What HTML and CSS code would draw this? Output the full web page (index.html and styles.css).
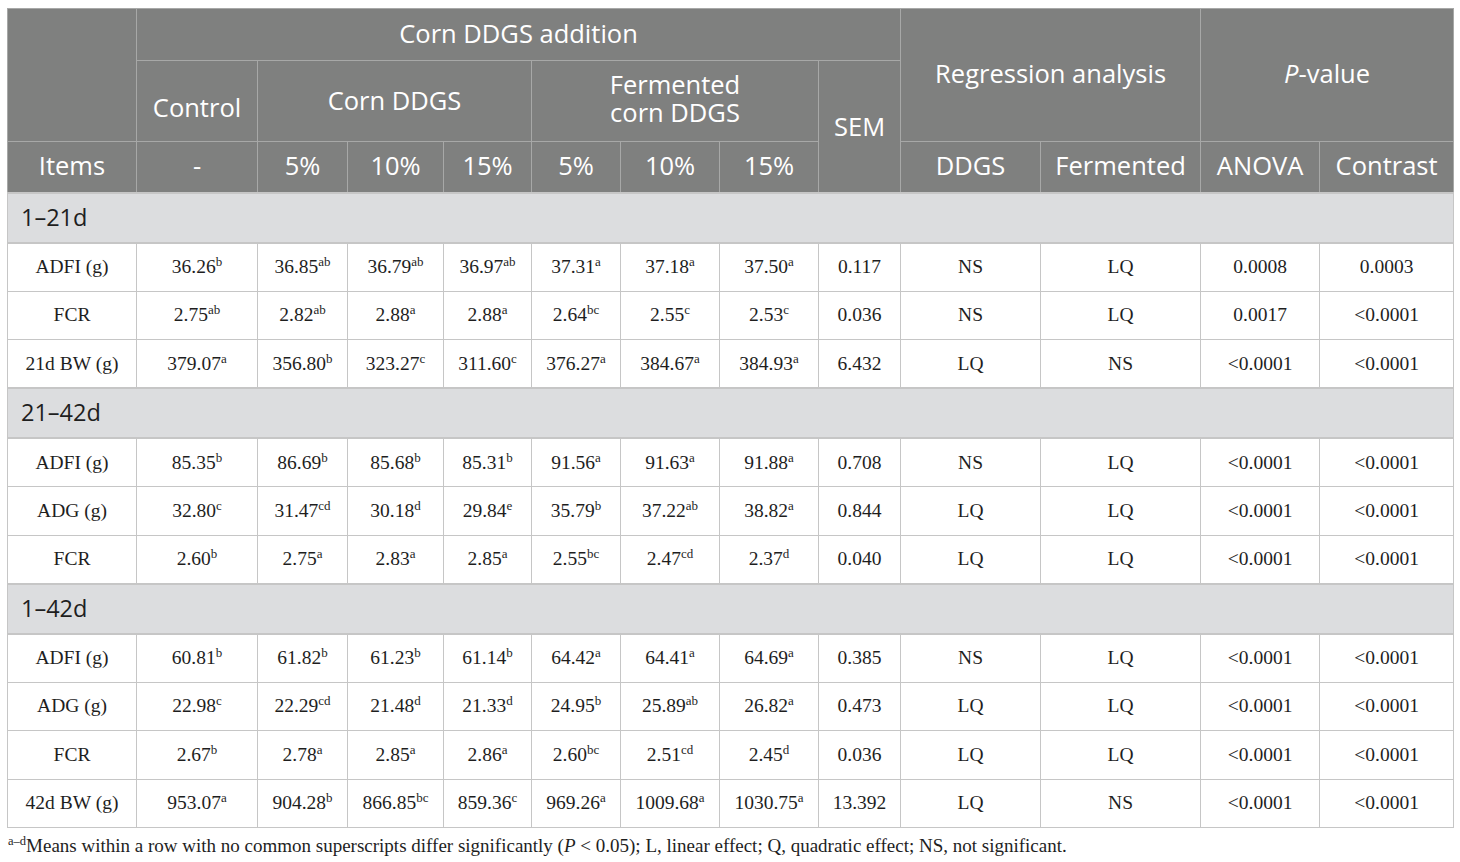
FILE: index.html
```html
<!DOCTYPE html>
<html lang="en">
<head>
    <meta charset="UTF-8">
    <title>Growth performance - Corn DDGS addition</title>
    <link rel="stylesheet" href="styles.css">
</head>
<body>
    <table class="data-table">
        <colgroup>
            <col class="c-item">
            <col class="c-control">
            <col class="c-d5">
            <col class="c-d10">
            <col class="c-d15">
            <col class="c-f5">
            <col class="c-f10">
            <col class="c-f15">
            <col class="c-sem">
            <col class="c-ddgs">
            <col class="c-ferm">
            <col class="c-anova">
            <col class="c-contrast">
        </colgroup>
        <thead>
            <tr class="head-1">
                <th rowspan="2"></th>
                <th colspan="8">Corn DDGS addition</th>
                <th colspan="2" rowspan="2" class="tall">Regression analysis</th>
                <th colspan="2" rowspan="2" class="tall"><i>P</i>-value</th>
            </tr>
            <tr class="head-2">
                <th class="control">Control</th>
                <th colspan="3">Corn DDGS</th>
                <th colspan="3" class="two-line">Fermented<br>corn DDGS</th>
                <th rowspan="2" class="sem">SEM</th>
            </tr>
            <tr class="head-3">
                <th>Items</th>
                <th>-</th>
                <th>5%</th>
                <th>10%</th>
                <th>15%</th>
                <th>5%</th>
                <th>10%</th>
                <th>15%</th>
                <th>DDGS</th>
                <th>Fermented</th>
                <th>ANOVA</th>
                <th>Contrast</th>
            </tr>
        </thead>
        <tbody>
            <tr class="section"><td colspan="13">1–21d</td></tr>
            <tr>
                <td>ADFI (g)</td>
                <td>36.26<sup>b</sup></td>
                <td>36.85<sup>ab</sup></td>
                <td>36.79<sup>ab</sup></td>
                <td>36.97<sup>ab</sup></td>
                <td>37.31<sup>a</sup></td>
                <td>37.18<sup>a</sup></td>
                <td>37.50<sup>a</sup></td>
                <td>0.117</td>
                <td>NS</td>
                <td>LQ</td>
                <td>0.0008</td>
                <td>0.0003</td>
            </tr>
            <tr>
                <td>FCR</td>
                <td>2.75<sup>ab</sup></td>
                <td>2.82<sup>ab</sup></td>
                <td>2.88<sup>a</sup></td>
                <td>2.88<sup>a</sup></td>
                <td>2.64<sup>bc</sup></td>
                <td>2.55<sup>c</sup></td>
                <td>2.53<sup>c</sup></td>
                <td>0.036</td>
                <td>NS</td>
                <td>LQ</td>
                <td>0.0017</td>
                <td>&lt;0.0001</td>
            </tr>
            <tr>
                <td>21d BW (g)</td>
                <td>379.07<sup>a</sup></td>
                <td>356.80<sup>b</sup></td>
                <td>323.27<sup>c</sup></td>
                <td>311.60<sup>c</sup></td>
                <td>376.27<sup>a</sup></td>
                <td>384.67<sup>a</sup></td>
                <td>384.93<sup>a</sup></td>
                <td>6.432</td>
                <td>LQ</td>
                <td>NS</td>
                <td>&lt;0.0001</td>
                <td>&lt;0.0001</td>
            </tr>
            <tr class="section"><td colspan="13">21–42d</td></tr>
            <tr>
                <td>ADFI (g)</td>
                <td>85.35<sup>b</sup></td>
                <td>86.69<sup>b</sup></td>
                <td>85.68<sup>b</sup></td>
                <td>85.31<sup>b</sup></td>
                <td>91.56<sup>a</sup></td>
                <td>91.63<sup>a</sup></td>
                <td>91.88<sup>a</sup></td>
                <td>0.708</td>
                <td>NS</td>
                <td>LQ</td>
                <td>&lt;0.0001</td>
                <td>&lt;0.0001</td>
            </tr>
            <tr>
                <td>ADG (g)</td>
                <td>32.80<sup>c</sup></td>
                <td>31.47<sup>cd</sup></td>
                <td>30.18<sup>d</sup></td>
                <td>29.84<sup>e</sup></td>
                <td>35.79<sup>b</sup></td>
                <td>37.22<sup>ab</sup></td>
                <td>38.82<sup>a</sup></td>
                <td>0.844</td>
                <td>LQ</td>
                <td>LQ</td>
                <td>&lt;0.0001</td>
                <td>&lt;0.0001</td>
            </tr>
            <tr>
                <td>FCR</td>
                <td>2.60<sup>b</sup></td>
                <td>2.75<sup>a</sup></td>
                <td>2.83<sup>a</sup></td>
                <td>2.85<sup>a</sup></td>
                <td>2.55<sup>bc</sup></td>
                <td>2.47<sup>cd</sup></td>
                <td>2.37<sup>d</sup></td>
                <td>0.040</td>
                <td>LQ</td>
                <td>LQ</td>
                <td>&lt;0.0001</td>
                <td>&lt;0.0001</td>
            </tr>
            <tr class="section"><td colspan="13">1–42d</td></tr>
            <tr>
                <td>ADFI (g)</td>
                <td>60.81<sup>b</sup></td>
                <td>61.82<sup>b</sup></td>
                <td>61.23<sup>b</sup></td>
                <td>61.14<sup>b</sup></td>
                <td>64.42<sup>a</sup></td>
                <td>64.41<sup>a</sup></td>
                <td>64.69<sup>a</sup></td>
                <td>0.385</td>
                <td>NS</td>
                <td>LQ</td>
                <td>&lt;0.0001</td>
                <td>&lt;0.0001</td>
            </tr>
            <tr>
                <td>ADG (g)</td>
                <td>22.98<sup>c</sup></td>
                <td>22.29<sup>cd</sup></td>
                <td>21.48<sup>d</sup></td>
                <td>21.33<sup>d</sup></td>
                <td>24.95<sup>b</sup></td>
                <td>25.89<sup>ab</sup></td>
                <td>26.82<sup>a</sup></td>
                <td>0.473</td>
                <td>LQ</td>
                <td>LQ</td>
                <td>&lt;0.0001</td>
                <td>&lt;0.0001</td>
            </tr>
            <tr>
                <td>FCR</td>
                <td>2.67<sup>b</sup></td>
                <td>2.78<sup>a</sup></td>
                <td>2.85<sup>a</sup></td>
                <td>2.86<sup>a</sup></td>
                <td>2.60<sup>bc</sup></td>
                <td>2.51<sup>cd</sup></td>
                <td>2.45<sup>d</sup></td>
                <td>0.036</td>
                <td>LQ</td>
                <td>LQ</td>
                <td>&lt;0.0001</td>
                <td>&lt;0.0001</td>
            </tr>
            <tr>
                <td>42d BW (g)</td>
                <td>953.07<sup>a</sup></td>
                <td>904.28<sup>b</sup></td>
                <td>866.85<sup>bc</sup></td>
                <td>859.36<sup>c</sup></td>
                <td>969.26<sup>a</sup></td>
                <td>1009.68<sup>a</sup></td>
                <td>1030.75<sup>a</sup></td>
                <td>13.392</td>
                <td>LQ</td>
                <td>NS</td>
                <td>&lt;0.0001</td>
                <td>&lt;0.0001</td>
            </tr>
        </tbody>
    </table>

    <p class="footnote"><sup>a–d</sup>Means within a row with no common superscripts differ significantly (<i>P</i> &lt; 0.05); L, linear effect; Q, quadratic effect; NS, not significant.</p>
</body>
</html>
```

FILE: styles.css
```css
:root {
    --head-bg: #7f807f;
    --head-line: #a7a8a7;
    --section-bg: #dcdddf;
    --cell-line: #c6c6c6;
    --text-dark: #1e1e1e;
}

* {
    margin: 0;
    padding: 0;
    box-sizing: border-box;
}

body {
    padding: 8px 7px 0;
    background: #ffffff;
    color: var(--text-dark);
    font-family: 'Liberation Serif', serif;
}

.data-table {
    width: 1446px;
    border-collapse: collapse;
    table-layout: fixed;
}

.c-item { width: 129px; }
.c-control { width: 121px; }
.c-d5 { width: 90px; }
.c-d10 { width: 96px; }
.c-d15 { width: 88px; }
.c-f5 { width: 89px; }
.c-f10 { width: 99px; }
.c-f15 { width: 99px; }
.c-sem { width: 82px; }
.c-ddgs { width: 140px; }
.c-ferm { width: 160px; }
.c-anova { width: 119px; }
.c-contrast { width: 134px; }

th {
    background: var(--head-bg);
    color: #ffffff;
    font-family: 'Open Sans', sans-serif;
    font-weight: 400;
    font-size: 25.5px;
    text-align: center;
    vertical-align: middle;
    border: 1px solid var(--head-line);
    white-space: nowrap;
    padding-bottom: 3px;
}

.head-1 th { height: 52px; }
.head-2 th { height: 81px; }
.head-3 th { height: 51px; }

.head-1 .tall { padding-bottom: 4px; }

.head-2 .control {
    padding-top: 12px;
    padding-bottom: 0;
}

.two-line {
    line-height: 28px;
}

.head-2 .two-line { padding-bottom: 6px; }

.head-2 .sem { padding-bottom: 0; }

td {
    height: 48.5px;
    font-size: 19.5px;
    text-align: center;
    vertical-align: middle;
    border: 1px solid var(--cell-line);
    white-space: nowrap;
}

sup {
    font-size: 13px;
    line-height: 0;
    vertical-align: 7px;
}

.section td {
    height: 50px;
    background: var(--section-bg);
    font-family: 'Open Sans', sans-serif;
    font-size: 23.5px;
    text-align: left;
    padding-left: 13px;
    padding-bottom: 2px;
    border-top: 2px solid var(--cell-line);
    border-bottom: 2px solid var(--cell-line);
}

.footnote {
    margin-top: 7px;
    padding-left: 1px;
    font-size: 19px;
    color: var(--text-dark);
}

.footnote sup {
    font-size: 12.5px;
    vertical-align: 7px;
}
```
